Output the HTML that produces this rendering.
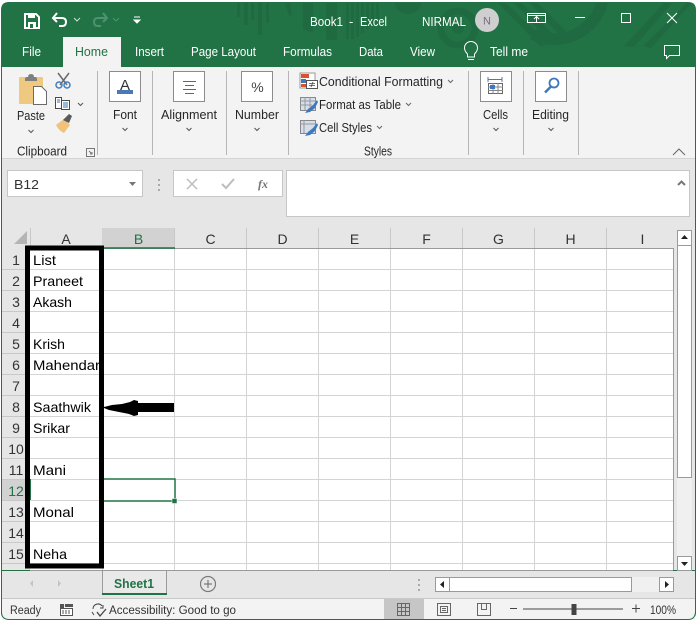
<!DOCTYPE html>
<html><head><meta charset="utf-8"><title>Book1 - Excel</title>
<style>
html,body{margin:0;padding:0;background:#fff;width:697px;height:626px;overflow:hidden}
svg{display:block;font-family:"Liberation Sans",sans-serif}
.t{font-size:13px;fill:#fff}
.r{font-size:13px;fill:#262626}
.c{font-size:14px;fill:#000}
.n{font-size:14px;fill:#333;text-anchor:middle}
.h{font-size:14px;fill:#333;text-anchor:middle}
.s{font-size:11.500px;fill:#333}
</style></head><body>
<svg width="697" height="626" viewBox="0 0 697 626" xmlns="http://www.w3.org/2000/svg">
<!-- window -->
<path d="M1 10 Q1 2 9 2 H688 Q696 2 696 10 V612 Q696 620 688 620 H9 Q1 620 1 612Z" fill="#217346"/>
<!-- title decorations -->
<g fill="#1f6a41">
<path d="M237 3h3v14h-3zM244 3h4v22h-4zM251 3h3v17h-3zM258 3h4v32h-4zM266 3h3v20h-3z"/>
<path d="M285 3h5l2 12-3 1zM303 3h10v30l-10-4zM326 3h11v37h-11zM346 3h3v36h-3zM351 3h3v36h-3zM356 3h3v34h-3zM361 3h3v30h-3zM366 3h3v26h-3zM371 3h3v22h-3zM376 3h3v18h-3z"/>
<path d="M394 3h28q-4 11-14 11t-14-11z"/>
</g>
<circle cx="458" cy="28" r="17" fill="none" stroke="#1f6a41" stroke-width="7"/>
<circle cx="458" cy="28" r="6" fill="#1f6a41"/>
<path d="M608 3A55 55 0 0 1 530 39L536 29A43 43 0 0 0 596 3Z" fill="#1f6a41"/>
<path d="M498 3h8l42 40-7 4zM514 3h8l36 36-6 5zM530 3h8l28 28-5 6z" fill="#1f6a41"/>
<path d="M624 46L664 3h8l-38 44zM643 46L687 3h5l-41 45z" fill="#1f6a41"/>
<!-- top white strip -->
<rect x="0" y="0" width="697" height="2" fill="#fff"/>
<!-- QAT -->
<path d="M25 14h11l3 3v11H25z" fill="none" stroke="#fff" stroke-width="2"/><path d="M28 14h7v4h-7zM28 22h8v6h-8z" fill="#fff"/><rect x="30" y="24" width="3" height="4" fill="#217346"/>
<path d="M57 13l-4 5 4 4M53 18h9q4 0 4 4t-4 4h-3" fill="none" stroke="#fff" stroke-width="2"/>
<path d="M74 18l3 3 3-3" fill="none" stroke="#cfe0d6" stroke-width="1"/>
<path d="M103 13l4 5-4 4M107 18h-9q-4 0-4 4t4 4h3" fill="none" stroke="#4f9170" stroke-width="2"/>
<path d="M113 18l3 3 3-3" fill="none" stroke="#4f9170" stroke-width="1"/>
<path d="M134 17h6M134 20h6l-3 3z" fill="#fff" stroke="#fff" stroke-width="1"/>
<!-- title text -->
<text class="t" x="310" y="26" textLength="33" lengthAdjust="spacingAndGlyphs">Book1</text>
<text class="t" x="349" y="26">-</text>
<text class="t" x="360" y="26" textLength="27" lengthAdjust="spacingAndGlyphs">Excel</text>
<text class="t" x="422" y="26" textLength="44" lengthAdjust="spacingAndGlyphs">NIRMAL</text>
<circle cx="487" cy="20" r="12" fill="#cfcfcf"/>
<text x="487" y="24.500" font-size="11" fill="#7a6a86" text-anchor="middle">N</text>
<!-- window ctrls -->
<path d="M527.500 13.500h18v9h-18zM527.500 13.500h18v2h-18z" fill="none" stroke="#fff"/><path d="M536.500 22v-5M534 19l2.500-2.500 2.500 2.500" fill="none" stroke="#fff"/>
<path d="M575 17.500h10" stroke="#fff"/>
<rect x="621.500" y="13.500" width="9" height="9" fill="none" stroke="#fff"/>
<path d="M667 13l10 10M677 13l-10 10" stroke="#fff" fill="none"/>
<!-- tabs -->
<rect x="63" y="37" width="58" height="30" fill="#f3f3f3"/>
<text class="t" x="22" y="56" textLength="19" lengthAdjust="spacingAndGlyphs">File</text>
<text class="t" x="75" y="56" textLength="33" lengthAdjust="spacingAndGlyphs" style="fill:#217346">Home</text>
<text class="t" x="135" y="56" textLength="29" lengthAdjust="spacingAndGlyphs">Insert</text>
<text class="t" x="191" y="56" textLength="65" lengthAdjust="spacingAndGlyphs">Page Layout</text>
<text class="t" x="283" y="56" textLength="49" lengthAdjust="spacingAndGlyphs">Formulas</text>
<text class="t" x="359" y="56" textLength="24" lengthAdjust="spacingAndGlyphs">Data</text>
<text class="t" x="410" y="56" textLength="25" lengthAdjust="spacingAndGlyphs">View</text>
<path d="M467.500 54q-3-3-3-6a6.500 6.500 0 0 1 13 0q0 3-3 6v3h-7zM468 59.500h6" fill="none" stroke="#fff"/>
<text class="t" x="490" y="56" textLength="38" lengthAdjust="spacingAndGlyphs">Tell me</text>
<path d="M664.500 45.500h15v10h-10l-3 3v-3h-2z" fill="none" stroke="#fff"/>
<!-- ribbon -->
<rect x="2" y="67" width="693" height="91" fill="#f3f3f3"/>
<rect x="2" y="158" width="693" height="1" fill="#d4d4d4"/>
<rect x="2" y="159" width="693" height="411" fill="#e6e6e6"/>
<g stroke="#b5b5b5"><path d="M97.500 71v84M152.500 71v84M226.500 71v84M288.500 71v84M468.500 71v84M523.500 71v84M578.500 71v84"/></g>
<!-- clipboard -->
<rect x="19" y="77" width="24" height="27" rx="1" fill="#efc97f"/>
<path d="M25 79q0-2 2-2h1q0-3 3-3t3 3h1q2 0 2 2v2H25z" fill="#7f7f7f"/>
<path d="M33.500 86.500h8l5 5v13h-13z" fill="#fff" stroke="#6a6a6a"/>
<path d="M58 73l9 12M69 73l-9 12" stroke="#6a6a6a" stroke-width="1.500"/>
<circle cx="59" cy="85" r="3" fill="none" stroke="#3f7fc0" stroke-width="1.500"/><circle cx="67" cy="85" r="3" fill="none" stroke="#3f7fc0" stroke-width="1.500"/>
<path d="M55.500 97.500v11h6v-11zM61.500 100.500h8v9h-8z" fill="#fff" stroke="#4a4a4a"/><path d="M57 100h3M57 102h3M63 103h5M63 105h5M63 107h5" stroke="#2f75b5"/>
<path d="M78 103l2.500 2.500 2.500-2.500" fill="none" stroke="#555"/>
<path d="M56 125l8-6 6 6-6 8q-5-2-8-8z" fill="#f0c27b"/><path d="M63 120l6-6 3 2-3 7z" fill="#5a5a5a"/>
<text class="r" x="17" y="120" textLength="28" lengthAdjust="spacingAndGlyphs">Paste</text>
<path d="M28.500 130l2.500 2.500 2.500-2.500" fill="none" stroke="#555"/>
<text class="r" x="17" y="155.500" textLength="50" lengthAdjust="spacingAndGlyphs">Clipboard</text>
<path d="M86.500 148.500h8v8h-8zM89 151l3 3M92 152v2h-2" fill="none" stroke="#777"/>
<!-- box buttons -->
<g fill="#fff" stroke="#8c8c8c"><rect x="109.500" y="71.500" width="31" height="30"/><rect x="173.500" y="71.500" width="31" height="30"/><rect x="241.500" y="71.500" width="31" height="30"/><rect x="480.500" y="71.500" width="31" height="30"/><rect x="535.500" y="71.500" width="31" height="30"/></g>
<text x="125" y="90" font-size="15" fill="#333" text-anchor="middle">A</text><rect x="117" y="90" width="16" height="4" fill="#4a7ab5"/>
<path d="M183 81.500h13M185 85.500h9M183 89.500h13M185 93.500h9" stroke="#666" fill="none"/>
<text x="257.500" y="92" font-size="14" fill="#444" text-anchor="middle">%</text>
<path d="M488 79.500h14M488 77v5M502 77v5" stroke="#4a7ab5" fill="none"/>
<rect x="488.500" y="83.500" width="14" height="10" fill="#fff" stroke="#666"/><path d="M488 87h15M488 90.500h15M493 83v11M498 83v11" stroke="#888"/><rect x="490" y="85" width="5" height="4" fill="#3f78bc"/>
<circle cx="554" cy="83" r="4.500" fill="none" stroke="#3f78bc" stroke-width="1.800"/><path d="M551 86.500l-6 6" stroke="#3f78bc" stroke-width="2.500"/>
<text class="r" x="113" y="119" textLength="24" lengthAdjust="spacingAndGlyphs">Font</text>
<text class="r" x="161" y="119" textLength="56" lengthAdjust="spacingAndGlyphs">Alignment</text>
<text class="r" x="235" y="119" textLength="44" lengthAdjust="spacingAndGlyphs">Number</text>
<text class="r" x="483" y="119" textLength="25" lengthAdjust="spacingAndGlyphs">Cells</text>
<text class="r" x="532" y="119" textLength="37" lengthAdjust="spacingAndGlyphs">Editing</text>
<g fill="none" stroke="#555"><path d="M122.500 128l2.500 2.500 2.500-2.500M186.500 128l2.500 2.500 2.500-2.500M254.500 128l2.500 2.500 2.500-2.500M493.500 128l2.500 2.500 2.500-2.500M548.500 128l2.500 2.500 2.500-2.500"/></g>
<!-- styles -->
<path d="M300 73h15v15h-15z" fill="#fff" stroke="#9a9a9a"/><rect x="301" y="74" width="8" height="4" fill="#d9542b"/><rect x="301" y="79" width="5" height="4" fill="#3f78bc"/><rect x="301" y="84" width="7" height="3" fill="#d9542b"/>
<rect x="306.500" y="80.500" width="11" height="8" fill="#fff" stroke="#555"/><path d="M309 83.500h6M309 85.500h6M313 82l-2 5" stroke="#444" stroke-width=".8"/>
<text class="r" x="319" y="86" textLength="124" lengthAdjust="spacingAndGlyphs">Conditional Formatting</text>
<path d="M448 80l2.500 2.500 2.500-2.500" fill="none" stroke="#666"/>
<rect x="300.500" y="97.500" width="15" height="13" fill="#d5deea" stroke="#888"/><path d="M300 101h16M300 105h12M305 97v13M310 97v10" stroke="#999"/>
<path d="M305 113l3-4 5-4 4-5 1 2-3 6-5 4z" fill="#3f78bc"/>
<text class="r" x="319" y="109" textLength="82" lengthAdjust="spacingAndGlyphs">Format as Table</text>
<path d="M406 103l2.500 2.500 2.500-2.500" fill="none" stroke="#666"/>
<rect x="300.500" y="120.500" width="15" height="13" fill="#d5deea" stroke="#888"/><path d="M304 120v13M300 124h16" stroke="#999"/>
<path d="M305 136l3-4 5-4 4-5 1 2-3 6-5 4z" fill="#3f78bc"/>
<text class="r" x="319" y="132" textLength="53" lengthAdjust="spacingAndGlyphs">Cell Styles</text>
<path d="M377 126l2.500 2.500 2.500-2.500" fill="none" stroke="#666"/>
<text class="r" x="364" y="155.500" textLength="28" lengthAdjust="spacingAndGlyphs">Styles</text>
<path d="M673 155l6-6 6 6" fill="none" stroke="#666"/>
<!-- formula bar -->
<rect x="7.500" y="170.500" width="135" height="26" fill="#fff" stroke="#c6c6c6"/>
<text x="14" y="189" font-size="13" fill="#333" textLength="25" lengthAdjust="spacingAndGlyphs">B12</text>
<path d="M129 182h7l-3.500 4z" fill="#777"/>
<path d="M158 179h2v2h-2zM158 184h2v2h-2zM158 189h2v2h-2z" fill="#aaa"/>
<rect x="173.500" y="170.500" width="109" height="26" fill="#fff" stroke="#c6c6c6"/>
<path d="M187 179l10 10M197 179l-10 10" stroke="#bdbdbd" stroke-width="1.500"/>
<path d="M222 184l4 4 8-9" fill="none" stroke="#bdbdbd" stroke-width="2"/>
<text x="258" y="188" font-size="12" font-style="italic" font-weight="bold" font-family="Liberation Serif" fill="#777">fx</text>
<rect x="286.500" y="170.500" width="403" height="46" fill="#fff" stroke="#c6c6c6"/>
<path d="M678 185l3.500-3.500 3.500 3.500" fill="none" stroke="#777" stroke-width="2"/>
<!-- grid -->
<rect x="30" y="248" width="643" height="322" fill="#fff"/>
<rect x="2" y="248" width="28" height="322" fill="#e6e6e6"/>
<path d="M14 244h13v-13z" fill="#b5b5b5"/>
<rect x="102" y="228" width="73" height="20" fill="#d2d2d2"/>
<rect x="2" y="479" width="28" height="21" fill="#d2d2d2"/>
<g stroke="#d4d4d4" fill="none">
<path d="M30 269.500h643M30 290.500h643M30 311.500h643M30 332.500h643M30 353.500h643M30 374.500h643M30 395.500h643M30 416.500h643M30 437.500h643M30 458.500h643M30 479.500h643M30 500.500h643M30 521.500h643M30 542.500h643M30 563.500h643"/>
<path d="M102.500 248v322M174.500 248v322M246.500 248v322M318.500 248v322M390.500 248v322M462.500 248v322M534.500 248v322M606.500 248v322"/>
<path d="M2 269.500h28M2 290.500h28M2 311.500h28M2 332.500h28M2 353.500h28M2 374.500h28M2 395.500h28M2 416.500h28M2 437.500h28M2 458.500h28M2 479.500h28M2 500.500h28M2 521.500h28M2 542.500h28M2 563.500h28" stroke="#c8c8c8"/>
<path d="M30.500 228v20M174.500 228v20M246.500 228v20M318.500 228v20M390.500 228v20M462.500 228v20M534.500 228v20M606.500 228v20" stroke="#c8c8c8"/>
</g>
<path d="M30 248.500h643M673.500 248v322M30 570.500h643" stroke="#9a9a9a" fill="none"/>
<path d="M102 248h73" stroke="#217346" stroke-width="1.500"/>
<path d="M30.500 479v21" stroke="#217346"/>
<text class="h" x="66" y="244">A</text><text class="h" x="138.500" y="244" style="fill:#217346">B</text><text class="h" x="210.500" y="244">C</text><text class="h" x="282.500" y="244">D</text><text class="h" x="354.500" y="244">E</text><text class="h" x="426.500" y="244">F</text><text class="h" x="498.500" y="244">G</text><text class="h" x="570.500" y="244">H</text><text class="h" x="642.500" y="244">I</text>
<text class="n" x="16" y="265">1</text><text class="n" x="16" y="286">2</text><text class="n" x="16" y="307">3</text><text class="n" x="16" y="328">4</text><text class="n" x="16" y="349">5</text><text class="n" x="16" y="370">6</text><text class="n" x="16" y="391">7</text><text class="n" x="16" y="412">8</text><text class="n" x="16" y="433">9</text><text class="n" x="16" y="454">10</text><text class="n" x="16" y="475">11</text><text class="n" x="16" y="496" style="fill:#217346">12</text><text class="n" x="16" y="517">13</text><text class="n" x="16" y="538">14</text><text class="n" x="16" y="559">15</text>
<text class="c" x="33" y="265" textLength="23" lengthAdjust="spacingAndGlyphs">List</text>
<text class="c" x="33" y="286" textLength="50" lengthAdjust="spacingAndGlyphs">Praneet</text>
<text class="c" x="33" y="307" textLength="39" lengthAdjust="spacingAndGlyphs">Akash</text>
<text class="c" x="33" y="349" textLength="32" lengthAdjust="spacingAndGlyphs">Krish</text>
<text class="c" x="33" y="370" textLength="67" lengthAdjust="spacingAndGlyphs">Mahendar</text>
<text class="c" x="33" y="412" textLength="58" lengthAdjust="spacingAndGlyphs">Saathwik</text>
<text class="c" x="33" y="433" textLength="37" lengthAdjust="spacingAndGlyphs">Srikar</text>
<text class="c" x="33" y="475" textLength="33" lengthAdjust="spacingAndGlyphs">Mani</text>
<text class="c" x="33" y="517" textLength="41" lengthAdjust="spacingAndGlyphs">Monal</text>
<text class="c" x="33" y="559" textLength="34" lengthAdjust="spacingAndGlyphs">Neha</text>
<!-- selection -->
<rect x="103" y="479" width="72" height="22" fill="#fff" stroke="#217346" stroke-width="1.500"/>
<rect x="172" y="498.500" width="5" height="5" fill="#217346" stroke="#fff" stroke-width=".5"/>
<!-- black annotations -->
<rect x="27.500" y="248" width="74" height="318" fill="none" stroke="#000" stroke-width="5"/>
<path d="M104 407l8-2 10-1 8-2 4-2 4 1v2h36v9h-36v3l-4 1-5-2-10-2-10-2-5-2z" fill="#000"/>
<!-- v scrollbar -->
<rect x="677" y="230" width="15" height="341" fill="#f0f0f0"/>
<rect x="677.500" y="245.500" width="14" height="232" fill="#fff" stroke="#9a9a9a"/>
<rect x="677.500" y="230.500" width="14" height="15" fill="#fff" stroke="#9a9a9a"/>
<path d="M681 239l3.500-4 3.500 4z" fill="#222"/>
<rect x="677.500" y="556.500" width="14" height="14" fill="#fff" stroke="#9a9a9a"/>
<path d="M681 562h7l-3.500 4z" fill="#222"/>
<!-- sheet tabs -->
<rect x="2" y="571" width="693" height="28" fill="#e6e6e6"/>
<path d="M102.500 571v23h64V571" fill="#e9e9e9" stroke="#9a9a9a"/>
<rect x="102" y="593" width="65" height="2" fill="#217346"/>
<text x="114" y="588" font-size="13" font-weight="bold" fill="#217346" textLength="40" lengthAdjust="spacingAndGlyphs">Sheet1</text>
<path d="M33 580l-3 3.500 3 3.500zM58 580l3 3.500-3 3.500z" fill="#c4c4c4"/>
<circle cx="208" cy="584" r="7.500" fill="none" stroke="#7a7a7a" stroke-width="1.200"/><path d="M208 580v8M204 584h8" stroke="#7a7a7a" stroke-width="1.200"/>
<path d="M418 579h2v2h-2zM418 584h2v2h-2zM418 589h2v2h-2z" fill="#aaa"/>
<rect x="435" y="577" width="239" height="15" fill="#f0f0f0"/>
<rect x="449.500" y="577.500" width="182" height="14" fill="#fff" stroke="#9a9a9a"/>
<rect x="435.500" y="577.500" width="14" height="14" fill="#fff" stroke="#9a9a9a"/>
<path d="M444 581v7l-4-3.500z" fill="#222"/>
<rect x="659.500" y="577.500" width="14" height="14" fill="#fff" stroke="#9a9a9a"/>
<path d="M665 581v7l4-3.500z" fill="#222"/>
<!-- status -->
<rect x="2" y="599" width="693" height="21" fill="#f3f3f3"/>
<rect x="2" y="598" width="693" height="1" fill="#c8c8c8"/>
<rect x="384" y="599" width="40" height="21" fill="#c6c6c6"/>
<text class="s" x="10" y="614" textLength="31" lengthAdjust="spacingAndGlyphs">Ready</text>
<rect x="60" y="604" width="4" height="4" fill="#555"/><rect x="65" y="604" width="8" height="3" fill="#555"/><rect x="60.500" y="608.500" width="12" height="7" fill="#fff" stroke="#555"/><path d="M62 611h2M65 611h2M68 611h2M62 613h2M65 613h2M68 613h2" stroke="#555"/>
<path d="M93 609a5 5 0 0 1 9-3M92 612l2 3M103 605v3h-3" fill="none" stroke="#444"/><path d="M97 612l3 4 6-7" fill="none" stroke="#444" stroke-width="1.300"/>
<text class="s" x="109" y="614" textLength="127" lengthAdjust="spacingAndGlyphs">Accessibility: Good to go</text>
<g fill="none" stroke="#666"><path d="M397.500 603.500h12v12h-12zM397 607.500h13M397 611.500h13M401.500 603v13M405.500 603v13"/><path d="M437.500 603.500h13v12h-13zM440.500 606.500h7v6h-7zM442 608.500h4M442 610.500h4"/><path d="M477.500 603.500h13v12h-13zM481.500 603.500v6h5v-6"/></g>
<path d="M510 608.500h7M632 608.500h8M636 604.500v8" stroke="#444" fill="none"/>
<path d="M523 609h100" stroke="#444"/>
<rect x="571.500" y="604" width="5" height="11" fill="#444"/>
<text class="s" x="650" y="614" textLength="26" lengthAdjust="spacingAndGlyphs">100%</text>
<!-- side edges -->
<path d="M1.500 67v545q0 7 7 7.500H688q7 0 7.500-7.500V67" fill="none" stroke="#217346" stroke-width="1"/>
</svg>
</body></html>
